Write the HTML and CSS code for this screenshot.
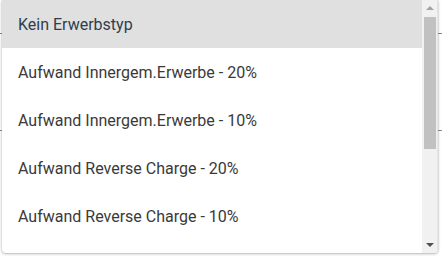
FILE: index.html
```html
<!DOCTYPE html>
<html lang="de">
<head>
<meta charset="utf-8">
<link rel="stylesheet" href="styles.css">
</head>
<body>
<div class="page">
  <div class="field"></div>
  <div class="field"></div>
  <div class="menu">
    <ul class="list">
      <li class="item active">Kein Erwerbstyp</li>
      <li class="item">Aufwand Innergem.Erwerbe - 20%</li>
      <li class="item">Aufwand Innergem.Erwerbe - 10%</li>
      <li class="item">Aufwand Reverse Charge - 20%</li>
      <li class="item">Aufwand Reverse Charge - 10%</li>
    </ul>
    <div class="scrollbar">
      <span class="arrow up"></span>
      <div class="thumb"></div>
      <span class="arrow down"></span>
    </div>
  </div>
</div>
</body>
</html>
```
FILE: styles.css
```css
html, body {
  margin: 0;
  padding: 0;
  background: #ffffff;
}
.page {
  position: relative;
  width: 442px;
  height: 256px;
  overflow: hidden;
  font-family: Roboto, "Liberation Sans", sans-serif;
}
.field {
  height: 33px;
  border-bottom: 1px solid #8a8a8a;
  margin-bottom: 63px;
}
.menu {
  position: absolute;
  left: 2px;
  top: 0;
  width: 436px;
  height: 253px;
  background: #ffffff;
  border-radius: 0 0 4px 4px;
  box-shadow: 0 1px 3px rgba(0,0,0,0.25), 0 0 2px rgba(0,0,0,0.18);
  display: flex;
  overflow: hidden;
}
.list {
  list-style: none;
  margin: 0;
  padding: 0;
  flex: 1;
}
.item {
  height: 48px;
  display: flex;
  align-items: center;
  padding-left: 16px;
  font-size: 16px;
  color: #3a3a3a;
}
.item.active {
  background: #e0e0e0;
  color: #2c3e50;
}
.scrollbar {
  width: 16px;
  flex: none;
  background: #f1f1f1;
  display: flex;
  flex-direction: column;
  align-items: center;
  padding-top: 6px;
  box-sizing: border-box;
  border-right: 1px solid #e4e4e4;
}
.arrow {
  width: 0;
  height: 0;
  border-left: 4px solid transparent;
  border-right: 4px solid transparent;
}
.arrow.up {
  border-bottom: 4px solid #a3a3a3;
  margin-bottom: 7px;
}
.thumb {
  width: 12px;
  height: 132px;
  background: #c1c1c1;
}
.arrow.down {
  border-top: 4px solid #505050;
  margin-top: auto;
  margin-bottom: 6px;
}
```
